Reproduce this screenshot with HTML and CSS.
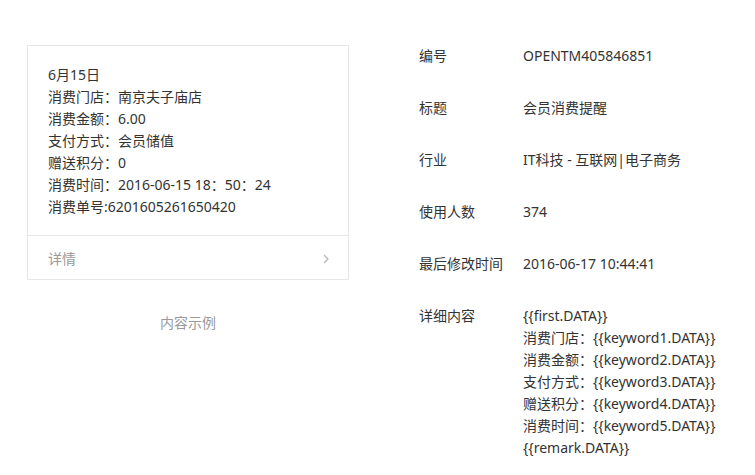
FILE: index.html
```html
<!doctype html>
<html>
  <head>
    <meta charset="utf-8" />
    <title>模板详情</title>
    <link rel="stylesheet" href="styles.css">
  </head>
  <body>
    <div class="page">
      <div class="preview">
        <div class="card">
          <div class="card-body">
            <p>6月15日</p>
            <p>消费门店：南京夫子庙店</p>
            <p>消费金额：6.00</p>
            <p>支付方式：会员储值</p>
            <p>赠送积分：0</p>
            <p>消费时间：2016-06-15 18：50：24</p>
            <p>消费单号:6201605261650420</p>
          </div>
          <div class="card-footer">
            <span>详情</span>
            <svg class="arrow" width="6" height="10" viewBox="0 0 6 10">
              <path d="M1 1 L5 5 L1 9" fill="none" stroke="#b2b2b2" stroke-width="1.2" />
            </svg>
          </div>
        </div>
        <div class="preview-tip">内容示例</div>
      </div>

      <div class="info">
        <div class="row">
          <div class="label">编号</div>
          <div class="value">OPENTM405846851</div>
        </div>
        <div class="row">
          <div class="label">标题</div>
          <div class="value">会员消费提醒</div>
        </div>
        <div class="row">
          <div class="label">行业</div>
          <div class="value">IT科技 - 互联网|电子商务</div>
        </div>
        <div class="row">
          <div class="label">使用人数</div>
          <div class="value">374</div>
        </div>
        <div class="row">
          <div class="label">最后修改时间</div>
          <div class="value">2016-06-17 10:44:41</div>
        </div>
        <div class="row">
          <div class="label">详细内容</div>
          <div class="value">
            <p>{{first.DATA}}</p>
            <p>消费门店：{{keyword1.DATA}}</p>
            <p>消费金额：{{keyword2.DATA}}</p>
            <p>支付方式：{{keyword3.DATA}}</p>
            <p>赠送积分：{{keyword4.DATA}}</p>
            <p>消费时间：{{keyword5.DATA}}</p>
            <p>{{remark.DATA}}</p>
          </div>
        </div>
      </div>
    </div>
  </body>
</html>
```

FILE: styles.css
```css
* {
  margin: 0;
  padding: 0;
  box-sizing: border-box;
}

body {
  background: #fff;
  color: #333;
  font-family: "Noto Sans", "Noto Sans CJK SC", sans-serif;
  font-size: 14px;
  line-height: 22px;
}

.page {
  display: flex;
  padding: 45px 0 0 27px;
}

.preview {
  width: 322px;
}

.card {
  border: 1px solid #e7e7e7;
}

.card-body {
  padding: 18px 20px 17px;
}

.card-footer {
  display: flex;
  align-items: center;
  justify-content: space-between;
  border-top: 1px solid #e7e7e7;
  padding: 12px 19px 9px 20px;
  color: #999;
}

.arrow {
  display: block;
}

.preview-tip {
  margin-top: 32px;
  text-align: center;
  color: #999;
}

.info {
  margin-left: 70px;
}

.row {
  display: flex;
  margin-bottom: 30px;
}

.label {
  width: 104px;
  flex-shrink: 0;
}
```
